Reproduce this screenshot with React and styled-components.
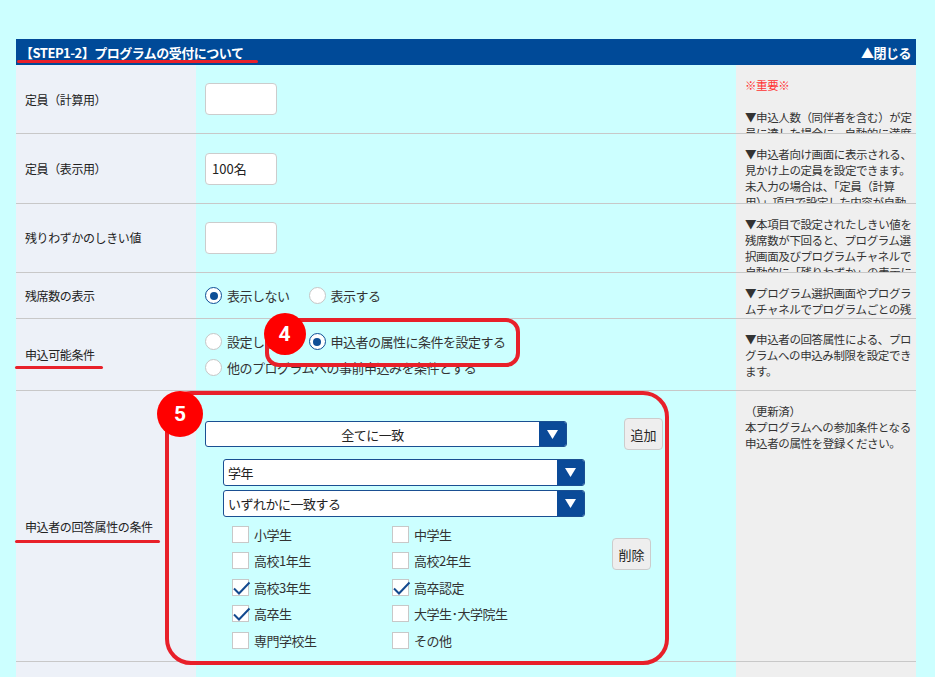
import styled, { createGlobalStyle } from "styled-components";

const GlobalStyle = createGlobalStyle`
	html, body {
		margin: 0;
		padding: 0;
		overflow: hidden;
		background: #ccffff;
	}
	body {
		font-family: "Noto Sans CJK JP", "Noto Sans", sans-serif;
		color: #333;
	}
`;

const Page = styled.div`
	padding: 39px 0 0 16px;
`;

const Panel = styled.section`
	width: 900px;
`;

const Header = styled.div`
	height: 26px;
	background: #004a98;
	color: #fff;
	display: flex;
	align-items: center;
	justify-content: space-between;
	padding: 0 5px 0 4px;
	font-size: 13px;
	font-weight: bold;
	letter-spacing: -0.5px;
`;

const Marked = styled.span`
	position: relative;
	z-index: 4;

	&::after {
		content: "";
		position: absolute;
		left: ${(p) => p.$left ?? -10}px;
		right: ${(p) => p.$right ?? -8}px;
		bottom: ${(p) => p.$bottom ?? -6}px;
		height: 3px;
		border-radius: 2px;
		background: #e8202a;
	}
`;

const Row = styled.div`
	display: grid;
	grid-template-columns: 180px 540px 180px;
	border-bottom: 1px solid #c8c8c8;
	min-height: ${(p) => p.$min || 0}px;
`;

const Label = styled.div`
	background: #edf1f8;
	display: flex;
	align-items: center;
	padding: 0 9px;
	font-size: 12px;
	letter-spacing: -0.4px;
	color: #222;
`;

const Field = styled.div`
	position: relative;
	background: #ccffff;
	padding: ${(p) => p.$pad || "18.2px 9px"};
	display: flex;
	flex-direction: column;
	justify-content: center;
	font-size: 13px;
	letter-spacing: -0.5px;
	color: #333;
`;

const Help = styled.div`
	background: #efefef;
	padding: 12px 4px 0 9px;
	font-size: 11.5px;
	letter-spacing: -0.4px;
	line-height: 16px;
	color: #333;
	contain: size;
	overflow: hidden;
`;

const HelpLine = styled.div`
	white-space: nowrap;
	min-height: 16px;
	color: ${(p) => (p.$alert ? "#ff3333" : "inherit")};
`;

const TextBox = styled.input`
	width: 72px;
	height: 32px;
	box-sizing: border-box;
	border: 1px solid #cccccc;
	border-radius: 4px;
	background: #fff;
	padding: 0 6px;
	font: inherit;
	color: #222;
	outline: none;
`;

const RadioGroup = styled.div`
	display: flex;
	flex-wrap: wrap;
	gap: 5px 19px;
`;

const RadioItem = styled.label`
	position: relative;
	display: inline-flex;
	align-items: center;
	gap: 5px;
	height: 21px;
	white-space: nowrap;
`;

const RadioCircle = styled.span`
	width: 17px;
	height: 17px;
	box-sizing: border-box;
	border-radius: 50%;
	background: #fff;
	border: ${(p) => (p.$on ? "1.5px solid #0d4e96" : "1px solid #c6c6c6")};
	display: flex;
	align-items: center;
	justify-content: center;

	&::after {
		content: "";
		display: ${(p) => (p.$on ? "block" : "none")};
		width: 8px;
		height: 8px;
		border-radius: 50%;
		background: #0d4e96;
	}
`;

const Callout = styled.span`
	position: absolute;
	top: ${(p) => p.$top}px;
	left: ${(p) => p.$left}px;
	right: ${(p) => p.$right}px;
	bottom: ${(p) => p.$bottom}px;
	border: 4px solid #e8202a;
	border-radius: ${(p) => p.$radius || 14}px;
	pointer-events: none;
	z-index: 2;
`;

const Badge = styled.span`
	position: absolute;
	top: ${(p) => p.$top}px;
	left: ${(p) => p.$left}px;
	width: ${(p) => p.$size}px;
	height: ${(p) => p.$size}px;
	border-radius: 50%;
	background: #ff0000;
	color: #fff;
	font-family: Roboto, "Liberation Sans", sans-serif;
	font-weight: bold;
	font-size: 21px;
	letter-spacing: 0;
	display: flex;
	align-items: center;
	justify-content: center;
	z-index: 3;
`;

const TopLine = styled.div`
	display: flex;
	align-items: center;
	gap: 57px;
`;

const SelectBox = styled.div`
	display: flex;
	width: 362px;
	height: ${(p) => p.$h || 27}px;
	box-sizing: border-box;
	border: 1px solid #1a4f92;
	border-radius: 3px;
	background: #fff;
	overflow: hidden;
`;

const SelectText = styled.span`
	flex: 1;
	display: flex;
	align-items: center;
	justify-content: ${(p) => (p.$center ? "center" : "flex-start")};
	padding: 0 4px;
	color: #222;
`;

const SelectArrow = styled.span`
	width: 27px;
	background: #0a4a98;
	display: flex;
	align-items: center;
	justify-content: center;
`;

const GrayButton = styled.button`
	width: 39px;
	height: 32px;
	padding: 0;
	border: 1px solid #cccccc;
	border-radius: 4px;
	background: #eeeeee;
	font: inherit;
	font-size: 13px;
	color: #222;
`;

const SubBlock = styled.div`
	display: flex;
	align-items: center;
	gap: 27px;
	margin: 9px 0 0 18px;
`;

const SubColumn = styled.div`
	display: flex;
	flex-direction: column;
	gap: 4px;
	width: 362px;
`;

const CheckGrid = styled.div`
	display: grid;
	grid-template-columns: 160px 160px;
	grid-auto-rows: 18px;
	row-gap: 8.5px;
	margin: 4px 0 0 9px;
`;

const CheckItem = styled.label`
	display: flex;
	align-items: center;
	gap: 5px;
	white-space: nowrap;
`;

const CheckBox = styled.span`
	position: relative;
	width: 17px;
	height: 17px;
	box-sizing: border-box;
	border: 1px solid #c8c8c8;
	background: #fff;

	svg {
		position: absolute;
		left: -1px;
		top: -1px;
	}
`;

const Arrow = () => (
	<svg width="11" height="9" viewBox="0 0 11 9">
		<polygon points="0,0 11,0 5.5,9" fill="#fff" />
	</svg>
);

const Select = ({ children, center, h }) => (
	<SelectBox $h={h}>
		<SelectText $center={center}>{children}</SelectText>
		<SelectArrow>
			<Arrow />
		</SelectArrow>
	</SelectBox>
);

const Radio = ({ on, children }) => (
	<RadioItem>
		<RadioCircle $on={on} />
		{children}
	</RadioItem>
);

const Check = ({ on, children }) => (
	<CheckItem>
		<CheckBox>
			{on && (
				<svg width="19" height="19" viewBox="0 0 19 19">
					<polyline
						points="2,9.5 7,14.5 17.5,3.5"
						fill="none"
						stroke="#12498f"
						strokeWidth="2"
					/>
				</svg>
			)}
		</CheckBox>
		{children}
	</CheckItem>
);

const grades = [
	["小学生", false],
	["中学生", false],
	["高校1年生", false],
	["高校2年生", false],
	["高校3年生", true],
	["高卒認定", true],
	["高卒生", true],
	["大学生･大学院生", false],
	["専門学校生", false],
	["その他", false],
];

const HelpText = ({ lines }) => (
	<Help>
		{lines.map((l, i) => (
			<HelpLine key={i} $alert={l.startsWith("※")}>
				{l}
			</HelpLine>
		))}
	</Help>
);

const App = () => {
	return (
		<Page>
			<GlobalStyle />
			<Panel>
				<Header>
					<Marked $left={-3} $right={-15} $bottom={-1}>
						【STEP1-2】プログラムの受付について
					</Marked>
					<span>▲閉じる</span>
				</Header>

				<Row>
					<Label>定員（計算用）</Label>
					<Field>
						<TextBox readOnly value="" />
					</Field>
					<HelpText
						lines={[
							"※重要※",
							"",
							"▼申込人数（同伴者を含む）が定",
							"員に達した場合に、自動的に満席",
						]}
					/>
				</Row>

				<Row>
					<Label>定員（表示用）</Label>
					<Field>
						<TextBox readOnly value="100名" />
					</Field>
					<HelpText
						lines={[
							"▼申込者向け画面に表示される、",
							"見かけ上の定員を設定できます。",
							"未入力の場合は、「定員（計算",
							"用）」項目で設定した内容が自動",
						]}
					/>
				</Row>

				<Row>
					<Label>残りわずかのしきい値</Label>
					<Field>
						<TextBox readOnly value="" />
					</Field>
					<HelpText
						lines={[
							"▼本項目で設定されたしきい値を",
							"残席数が下回ると、プログラム選",
							"択画面及びプログラムチャネルで",
							"自動的に「残りわずか」の表示に",
						]}
					/>
				</Row>

				<Row>
					<Label>残席数の表示</Label>
					<Field $pad="12px 9px">
						<RadioGroup>
							<Radio on>表示しない</Radio>
							<Radio>表示する</Radio>
						</RadioGroup>
					</Field>
					<HelpText
						lines={[
							"▼プログラム選択画面やプログラ",
							"ムチャネルでプログラムごとの残",
							"席数を表示するか設定できます。",
						]}
					/>
				</Row>

				<Row>
					<Label>
						<Marked $bottom={-6}>申込可能条件</Marked>
					</Label>
					<Field $pad="12px 9px">
						<RadioGroup>
							<Radio>設定しない</Radio>
							<RadioItem>
								<Callout $top={-13} $left={-44} $right={-14} $bottom={-15} />
								<Badge $top={-18} $left={-45} $size={42}>
									4
								</Badge>
								<RadioCircle $on />
								申込者の属性に条件を設定する
							</RadioItem>
							<Radio>他のプログラムへの事前申込みを条件とする</Radio>
						</RadioGroup>
					</Field>
					<HelpText
						lines={[
							"▼申込者の回答属性による、プロ",
							"グラムへの申込み制限を設定でき",
							"ます。",
						]}
					/>
				</Row>

				<Row>
					<Label>
						<Marked $bottom={-8} $right={-7}>
							申込者の回答属性の条件
						</Marked>
					</Label>
					<Field $pad="27px 9px 12px">
						<Callout $top={0} $left={-31} $right={67} $bottom={-4} $radius={26} />
						<Badge $top={0} $left={-39} $size={46}>
							5
						</Badge>
						<TopLine>
							<Select center h={26}>
								全てに一致
							</Select>
							<GrayButton>追加</GrayButton>
						</TopLine>
						<SubBlock>
							<SubColumn>
								<Select>学年</Select>
								<Select>いずれかに一致する</Select>
								<CheckGrid>
									{grades.map(([name, on]) => (
										<Check key={name} on={on}>
											{name}
										</Check>
									))}
								</CheckGrid>
							</SubColumn>
							<GrayButton>削除</GrayButton>
						</SubBlock>
					</Field>
					<HelpText
						lines={[
							"（更新済）",
							"本プログラムへの参加条件となる",
							"申込者の属性を登録ください。",
						]}
					/>
				</Row>

				<Row $min={60}>
					<Label />
					<Field />
					<Help />
				</Row>
			</Panel>
		</Page>
	);
};

export default App;
